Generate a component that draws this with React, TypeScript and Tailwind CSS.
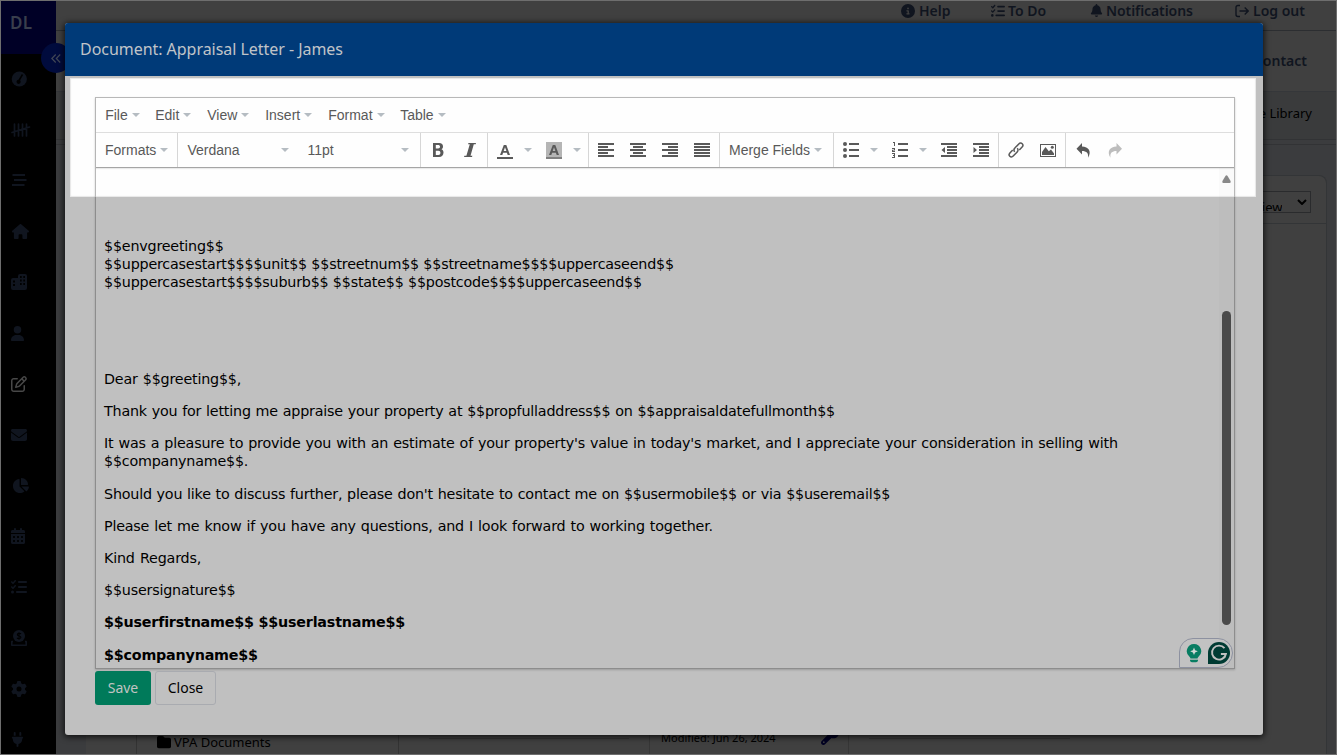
import React from 'react';
import {
  FaCircleInfo, FaListCheck, FaBell, FaHouse, FaUser, FaRegPenToSquare, FaEnvelope,
  FaChartPie, FaCalendarDays, FaGear, FaPlug, FaFolder, FaWrench,
} from 'react-icons/fa6';

const Caret = () => (
  <svg width="8" height="4" viewBox="0 0 8 4" className="shrink-0"><path d="M0 0h8L4 4z" fill="#b5bcc2" /></svg>
);

const Ico = ({ children, light }: { children: React.ReactNode; light?: boolean }) => (
  <div className="flex h-full w-8 shrink-0 items-center justify-center">
    <svg width="16" height="16" viewBox="0 0 16 16" className="overflow-visible" fill={light ? '#bdbdbd' : '#595959'}>{children}</svg>
  </div>
);

const Drop = () => <div className="flex h-full w-[17px] shrink-0 items-center pl-[3px]"><Caret /></div>;

const lines = ['M0 1h16v2H0z', 'M0 4h10v2H0z', 'M0 7h16v2H0z', 'M0 10h10v2H0z', 'M0 13h16v2H0z'];

const menus = [
  ['File', 'w-[50px]'], ['Edit', 'w-[52px]'], ['View', 'w-[58px]'],
  ['Insert', 'w-[63px]'], ['Format', 'w-[72px]'], ['Table', 'w-[60px]'],
];

const Tally = () => (
  <svg width="20" height="16" viewBox="0 0 20 16" stroke="currentColor" strokeWidth="1.7" fill="none" strokeLinecap="round">
    <path d="M3.5 2v12M7.5 2v12M11.500 2v12M15.500 2v12M1 10.500L18.500 5" />
  </svg>
);
const Bars = () => (
  <svg width="16" height="14" viewBox="0 0 16 14" stroke="currentColor" strokeWidth="1.8" className="-mt-[2px]"><path d="M1.500 2h12.500M3 7h12.500M1 12h12.500" /></svg>
);
const Gauge = () => (
  <svg width="16" height="16" viewBox="0 0 16 16"><circle cx="8.300" cy="8" r="7.600" fill="currentColor" /><path d="M11.500 3.500L8 9.500" stroke="#000" strokeWidth="1.500" /><circle cx="7.600" cy="10.800" r="2.100" fill="#000" /></svg>
);
const Building = () => (
  <svg width="16" height="16" viewBox="0 0 16 16" fill="currentColor" className="-mt-[2px]">
    <path fillRule="evenodd" d="M7 2a2 2 0 0 1 2-2h5a2 2 0 0 1 2 2v12a2 2 0 0 1-2 2H2a2 2 0 0 1-2-2V6a2 2 0 0 1 2-2h5zM9 2v2h1.700V2zM12.300 2v2H14V2zM9 5.500v2h1.700v-2zM12.300 5.500v2H14v-2zM9 9v2h1.700V9zM12.300 9v2H14V9zM2 6.500v2h2v-2zM2 10v2h2v-2z" />
  </svg>
);
const Donate = () => (
  <svg width="16" height="16" viewBox="0 0 16 16">
    <circle cx="8" cy="6" r="6" fill="currentColor" />
    <path d="M10 4C9.500 3.200 6.300 3 6.300 4.700c0 1.700 3.600.8 3.600 2.600C9.900 9 6.500 8.800 6 7.700M8 2.300v7.500" stroke="#000" strokeWidth="1.100" fill="none" />
    <path d="M2 11.500H.8v3.700h14.400v-3.700H14" stroke="currentColor" strokeWidth="1.600" fill="none" strokeLinejoin="round" />
  </svg>
);

const nav = [
  <Gauge />, <Tally />, <Bars />, <FaHouse size={17} className="ml-px -mt-px" />, <Building />, <FaUser size={15} className="-ml-px" />,
  <FaRegPenToSquare size={16} className="text-[#484848]" />, <FaEnvelope size={16} />, <FaChartPie size={17} className="ml-px -mt-px" />,
  <FaCalendarDays size={16} className="-ml-px -mt-[2px]" />, <FaListCheck size={16} />, <Donate />, <FaGear size={16} />, <FaPlug size={15} className="-ml-px" />,
];

const Background = () => (
  <div className="flex h-full w-full overflow-hidden border border-[#6e6e6e] bg-[#3b3c3e] font-['Noto_Sans',sans-serif]">
    <aside className="relative w-[55px] shrink-0 bg-black text-[#10151f]">
      <div className="flex h-[53px] items-center bg-[#000026] pb-[9px] pl-[9px] text-[17px] font-semibold tracking-[0.2px] text-[#393e4c]">DL</div>
      <div className="flex flex-col">
        {nav.map((n, i) => <div key={i} className="flex h-[50.8px] items-center pl-[10px]">{n}</div>)}
      </div>
      <div className="absolute left-[40px] top-[42px] flex h-[30px] w-[30px] items-center justify-center rounded-full bg-[#000b3d]">
        <svg width="10" height="9" viewBox="0 0 10 9" fill="none" stroke="#414755" strokeWidth="1.200"><path d="M4.700.5L.8 4.500l3.900 4M9.200.5L5.300 4.500l3.900 4" /></svg>
      </div>
    </aside>
    <main className="flex min-w-0 flex-1 flex-col">
      <div className="flex h-[30px] shrink-0 border-b border-[#2c2e31] bg-[#404040] pl-[845px] text-[14px] font-semibold text-[#10151f]">
        <div className="flex h-[18px] w-[90px] items-center gap-1"><FaCircleInfo size={14} className="mt-px" />Help</div>
        <div className="flex h-[18px] w-[99px] items-center gap-[3px]"><FaListCheck size={14} className="mt-px" />To Do</div>
        <div className="flex h-[18px] w-[145px] items-center gap-[3px] tracking-[-0.08px]"><FaBell size={13} className="mt-px" />Notifications</div>
        <div className="flex h-[18px] items-center gap-1">
          <svg width="14" height="14" viewBox="0 0 14 14" fill="none" stroke="currentColor" strokeWidth="1.400" className="mt-px"><path d="M5 1.500H3a2 2 0 0 0-2 2v7a2 2 0 0 0 2 2h2M4.500 7H13M9.700 3.500L13.200 7 9.700 10.500" /></svg>Log out
        </div>
      </div>
      <div className="flex h-[61px] shrink-0 items-center justify-end border-b border-[#35373a] bg-[#404040] pb-[2px] pr-[29px] text-[14px] font-semibold text-[#10151f]">Contact</div>
      <div className="flex h-[48px] shrink-0 items-center justify-end border-b border-[#323335] bg-[#3a3b3c] pb-1 pr-[24px] text-[13px] text-black">File Library</div>
      <div className="h-[5px] shrink-0 border-b border-[#323335]" />
      <div className="ml-[30px] mr-[9px] mt-[30px] flex min-h-0 flex-1 flex-col rounded-tr-lg border-r border-t border-[#333537] bg-[#404040]">
        <div className="flex h-[48px] shrink-0 justify-end border-b border-[#333537] pr-[15px] pt-[15px]">
          <div className="flex h-[22px] w-[120px] items-center justify-between overflow-hidden border border-[#2a2b2d] pl-[62px] pr-[3px] text-[13px] text-black">
            <span className="h-[17px] overflow-hidden pt-[3px] leading-[20px]">View</span>
            <svg width="10" height="6" viewBox="0 0 10 6" fill="none" stroke="#000" strokeWidth="2"><path d="M1 1l4 4 4-4" /></svg>
          </div>
        </div>
        <div className="flex flex-1">
          <div className="w-[51px] border-r border-[#333]" />
          <div className="flex w-[262px] items-end gap-[3px] border-r border-[#333] pb-[3px] pl-[20px] text-[13px] leading-[18px] text-black"><FaFolder size={14} className="mb-[2px]" />VPA Documents</div>
          <div className="flex w-[250px] flex-col justify-end pl-[30px] pr-[20px]"><div className="h-4 border-t border-[#353535]" /></div>
          <div className="flex w-[200px] items-end justify-between border-x border-[#363636] pb-[9px] pl-[11px] pr-[9px] text-[11px] leading-[14px] text-black">Modified: Jun 26, 2024<FaWrench size={18} className="text-[#000022]" /></div>
          <div className="flex w-[221px] flex-col justify-end pl-[20px]"><div className="h-4 border-t border-[#353535]" /></div>
        </div>
      </div>
    </main>
  </div>
);

const Toolbar = () => (
  <div className="flex h-[34px] items-center [&>*+*]:border-l [&>*+*]:border-[#d6d6d6]">
    <div className="flex h-full w-[81px] items-center gap-1 pl-[9px]">Formats <Caret /></div>
    <div className="flex h-full w-[243px] items-center pl-[9.500px]">
      <span className="w-[93.500px]">Verdana</span><Caret /><span className="ml-[18.500px] w-[93.500px]">11pt</span><Caret />
    </div>
    <div className="flex h-full w-[67px] items-center pl-px">
      <Ico><path fillRule="evenodd" d="M3 1h6.200C11.700 1 13 2.400 13 4.400c0 1.300-.6 2.200-1.500 2.800 1.300.5 2 1.700 2 3.300 0 2.600-1.700 4.500-4.400 4.500H3zM5.800 3v3.400h2.300c1.200 0 1.900-.6 1.900-1.700S9.300 3 8.100 3zM5.800 8.700V13h2.600c1.300 0 2-.8 2-2.200 0-1.300-.7-2.100-2-2.100z" /></Ico>
      <Ico><path d="M6.500 1H14l-.3 1.200h-1.900L8.500 13.800h1.900L10 15H2l.4-1.200h2L7.800 2.200H6z" /></Ico>
    </div>
    <div className="flex h-full w-[101px] items-center pl-px">
      <Ico><path fillRule="evenodd" d="M0 15h16v2H0zM6.800 3h2.500L13 13h-2.300l-.8-2.300H6.100L5.300 13H3zM8 5.200L6.700 9h2.700z" /></Ico><Drop />
      <Ico><path d="M0 0h16v16H0z" fill="#b5b5b5" /><path d="M0 15h16v2H0z" fill="#808080" /><path fillRule="evenodd" d="M6.800 3h2.500L13 13h-2.300l-.8-2.300H6.100L5.300 13H3zM8 5.200L6.700 9h2.700z" /></Ico><Drop />
    </div>
    <div className="flex h-full w-[131px] items-center pl-px">
      <Ico><path d={lines.join('')} /></Ico>
      <Ico><path d="M0 1h16v2H0zM3 4h10v2H3zM0 7h16v2H0zM3 10h10v2H3zM0 13h16v2H0z" /></Ico>
      <Ico><path d="M0 1h16v2H0zM6 4h10v2H6zM0 7h16v2H0zM6 10h10v2H6zM0 13h16v2H0z" /></Ico>
      <Ico><path d="M0 1h16v2H0zM0 4h16v2H0zM0 7h16v2H0zM0 10h16v2H0zM0 13h16v2H0z" /></Ico>
    </div>
    <div className="flex h-full w-[114px] items-center gap-1 pl-[9px]"><span className="whitespace-nowrap">Merge Fields</span><Caret /></div>
    <div className="flex h-full w-[165px] items-center pl-px">
      <Ico><path d="M6 1h10v2H6zM6 7h10v2H6zM6 13h10v2H6z" /><circle cx="2" cy="2" r="2" /><circle cx="2" cy="8" r="2" /><circle cx="2" cy="14" r="2" /></Ico><Drop />
      <Ico><path d="M6 1h10v2H6zM6 7h10v2H6zM6 13h10v2H6zM1 0h2v4H2V1H1zM0 6h3v2.500H1V9h2v1H0V7.700h2V7H0zM0 11h3v5H0v-1h2v-1H1v-1h1v-1H0z" /></Ico><Drop />
      <Ico><path d="M0 1h16v2H0zM6 4h10v2H6zM6 7h10v2H6zM6 10h10v2H6zM0 13h16v2H0zM4 5v6L0.500 8z" /></Ico>
      <Ico><path d="M0 1h16v2H0zM6 4h10v2H6zM6 7h10v2H6zM6 10h10v2H6zM0 13h16v2H0zM.5 5v6L4 8z" /></Ico>
    </div>
    <div className="flex h-full w-[67px] items-center pl-px">
      <Ico><g fill="none" stroke="#595959" strokeWidth="1.500"><path d="M6.800 9.700c-1.100-1.100-1.100-2.500 0-3.600l4-4.200c1.100-1.200 2.500-1.100 3.400-.2s.9 2.300-.1 3.400l-2.800 3" /><path d="M9.200 6.300c1.100 1.100 1.100 2.500 0 3.600l-4 4.200c-1.100 1.200-2.500 1.100-3.400.2s-.9-2.300.1-3.400l2.800-3" /></g></Ico>
      <Ico><path fillRule="evenodd" d="M0 2h16v13H0zM1 3v11h14V3z" /><path d="M2 13V10l3.500-5 3.300 4.300L11 7.500l3 4V13z" /><circle cx="12.300" cy="5.300" r="1.500" /></Ico>
    </div>
    <div className="flex h-full items-center pl-px">
      <Ico><path d="M7 1v3.500c6.500.1 10 4.900 6 11.200.8-5-1.500-6.700-6-6.800V12.500L1.500 6.700z" /></Ico>
      <Ico light><path d="M9.500 1v3.500c-6.500.1-10 4.900-6 11.200-.8-5 1.500-6.700 6-6.800V12.500L15 6.700z" /></Ico>
    </div>
  </div>
);

const Assistant = () => (
  <div className="absolute bottom-0 right-px flex h-[30px] w-[54px] items-center gap-[6px] rounded-r-[15px] rounded-tl-[14px] border border-[#8d91a0] bg-[#c2c2c2] pl-[6px]">
    <svg width="16" height="20" viewBox="0 0 16 20"><path d="M8 1a7.200 7.200 0 0 1 4.500 12.800c-.6.500-.7 1-1 1.600h-7c-.3-.6-.4-1.100-1-1.600A7.200 7.200 0 0 1 8 1zM4 16.700h8v.7a2 2 0 0 1-2 1.800H6a2 2 0 0 1-2-1.800z" fill="#087d62" /><path d="M8 4.500l1.100 2.700 2.700 1.100-2.700 1.100L8 12.100 6.900 9.400 4.200 8.300l2.700-1.100z" fill="#d2d8d5" /></svg>
    <svg width="22" height="22" viewBox="0 0 22 22"><path d="M11 0a11 11 0 1 1 0 22H0V11A11 11 0 0 1 11 0z" fill="#003b33" /><path d="M16.500 6.200A7 7 0 1 0 17.900 12h-5M17.800 12l-1.200 3.500" fill="none" stroke="#c0c0c0" strokeWidth="1.900" /></svg>
  </div>
);

export default function App() {
  return (
    <div className="relative h-[755px] w-[1337px] overflow-hidden">
      <Background />
      <section className="absolute left-[65px] top-[23px] flex h-[712px] w-[1198px] flex-col rounded-[3px] bg-[#c0c0c0] shadow-[0_1px_6px_1px_rgba(0,0,0,0.75)]">
        <header className="flex h-[53px] shrink-0 items-center rounded-t-[3px] bg-[#003a78] pb-[2px] pl-[15px] font-['Noto_Sans',sans-serif] text-[16px] tracking-[-0.04px] text-[#c0c4c8]">
          Document: Appraisal Letter - James
        </header>
        <div className="absolute left-[5px] top-[55px] h-[119px] w-[1186px] bg-[#fefefe] shadow-[inset_0_0_1px_1px_rgba(225,225,225,0.8)]" />
        <div className="relative ml-[30px] mt-[21px] flex h-[572px] w-[1140px] shrink-0 flex-col border border-[#8d8d8d] shadow-[0_1px_2px_rgba(0,0,0,0.2)]">
          <div className="absolute -left-px -right-px -top-px h-[100px] border-x border-t border-[#b8b8b8]" />
          <div className="relative border-b border-[#a5a5a5] font-['Liberation_Sans',Arial,sans-serif] text-[14px] text-[#595959] shadow-[0_1px_1px_rgba(0,0,0,0.08)]">
            <div className="flex h-[35px] items-center border-b border-[#dedede] pl-[9.200px]">
              {menus.map(([m, w]) => <div key={m} className={`flex items-center gap-[4px] ${w}`}>{m}<Caret /></div>)}
            </div>
            <Toolbar />
          </div>
          <div className="relative flex min-h-0 flex-1">
            <article className="min-w-0 flex-1 whitespace-nowrap pl-[8px] pt-[69px] font-['DejaVu_Sans',Verdana,sans-serif] text-[14.3px] leading-[18px] tracking-[-0.2px] text-black">
              <p>$$envgreeting$$<br />$$uppercasestart$$$$unit$$ $$streetnum$$ $$streetname$$$$uppercaseend$$<br />$$uppercasestart$$$$suburb$$ $$state$$ $$postcode$$$$uppercaseend$$</p>
              <p className="mt-[79px] [word-spacing:0.8px]">Dear $$greeting$$,</p>
              <p className="mt-[14px] [word-spacing:0.48px]">Thank you for letting me appraise your property at $$propfulladdress$$ on $$appraisaldatefullmonth$$</p>
              <p className="mt-[14px] [word-spacing:0.68px]">It was a pleasure to provide you with an estimate of your property's value in today's market, and I appreciate your consideration in selling with<br />$$companyname$$.</p>
              <p className="mt-[15px] [word-spacing:0.45px]">Should you like to discuss further, please don't hesitate to contact me on $$usermobile$$ or via $$useremail$$</p>
              <p className="mt-[14px] [word-spacing:0.7px]">Please let me know if you have any questions, and I look forward to working together.</p>
              <p className="mt-[14px] [word-spacing:1px]">Kind Regards,</p>
              <p className="mt-[14px]">$$usersignature$$</p>
              <p className="mt-[14px] font-bold">$$userfirstname$$ $$userlastname$$</p>
              <p className="mt-[15px] font-bold">$$companyname$$</p>
            </article>
            <div className="flex w-[15px] shrink-0 flex-col items-start bg-black/[0.015] pl-[3px] pt-[7px]">
              <svg width="9" height="8" viewBox="0 0 10 8" preserveAspectRatio="none"><path d="M3.800 1Q5-.5 6.200 1L9.500 6Q10 8 8.500 8h-7Q0 8 .5 6z" fill="#888" /></svg>
              <div className="mt-[128px] h-[314px] w-[9px] rounded-full bg-[#4a4a4a]" />
            </div>
            <Assistant />
          </div>
        </div>
        <div className="relative ml-[30px] mt-[2px] flex gap-1 font-['Noto_Sans',sans-serif] text-[14px]">
          <button className="h-[34px] w-[56px] rounded-[3px] bg-[#007a5a] pb-[2px] text-[#c0c4c2]">Save</button>
          <button className="h-[34px] w-[61px] rounded-[3px] border border-[#a9abb0] pb-[2px] text-black">Close</button>
        </div>
      </section>
    </div>
  );
}
